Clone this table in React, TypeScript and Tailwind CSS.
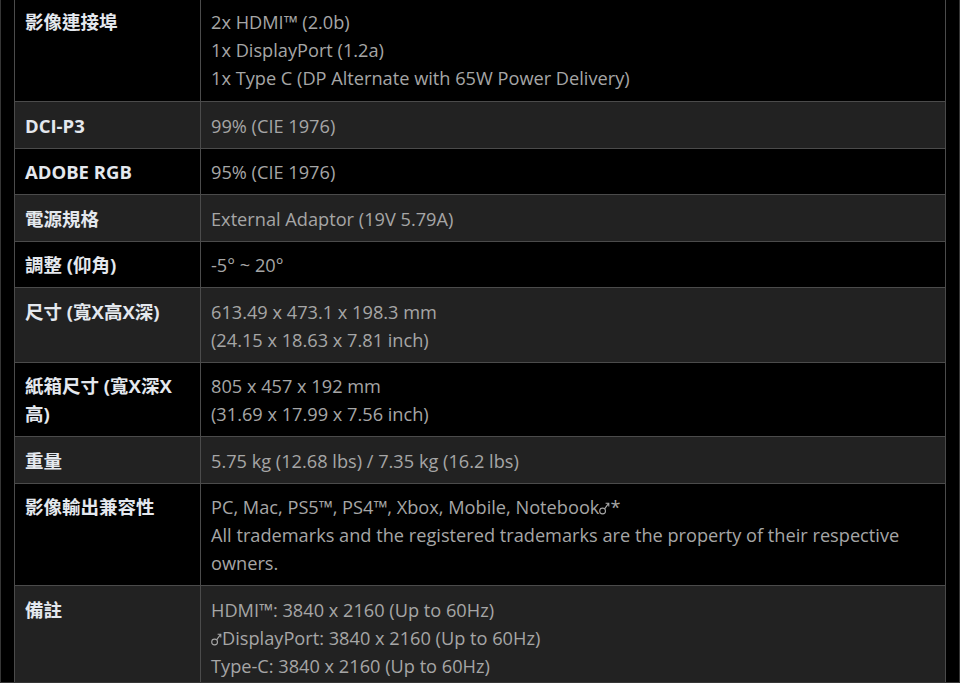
import React from 'react';

type Spec = { label: string; lines: React.ReactNode[] };

// thin male-sign style mark used in the source text
const Mark = () => (
  <svg
    width="11"
    height="14"
    viewBox="0 0 11 14"
    className="inline-block align-[-1px]"
    fill="none"
    stroke="currentColor"
    strokeWidth="1.1"
  >
    <circle cx="3.6" cy="10" r="2.9" />
    <path d="M5.6 7.9 L9.8 2.2 M6.6 2.2 H9.8 V5.4" />
  </svg>
);

const specs: Spec[] = [
  { label: '影像連接埠', lines: ['2x HDMI™ (2.0b)', '1x DisplayPort (1.2a)', '1x Type C (DP Alternate with 65W Power Delivery)'] },
  { label: 'DCI-P3', lines: ['99% (CIE 1976)'] },
  { label: 'ADOBE RGB', lines: ['95% (CIE 1976)'] },
  { label: '電源規格', lines: ['External Adaptor (19V 5.79A)'] },
  { label: '調整 (仰角)', lines: ['-5° ~ 20°'] },
  { label: '尺寸 (寬X高X深)', lines: ['613.49 x 473.1 x 198.3 mm', '(24.15 x 18.63 x 7.81 inch)'] },
  { label: '紙箱尺寸 (寬X深X高)', lines: ['805 x 457 x 192 mm', '(31.69 x 17.99 x 7.56 inch)'] },
  { label: '重量', lines: ['5.75 kg (12.68 lbs) / 7.35 kg (16.2 lbs)'] },
  {
    label: '影像輸出兼容性',
    lines: [
      <>PC, Mac, PS5™, PS4™, Xbox, Mobile, Notebook<Mark />*</>,
      'All trademarks and the registered trademarks are the property of their respective owners.',
    ],
  },
  {
    label: '備註',
    lines: ['HDMI™: 3840 x 2160 (Up to 60Hz)', <><Mark />DisplayPort: 3840 x 2160 (Up to 60Hz)</>, 'Type-C: 3840 x 2160 (Up to 60Hz)'],
  },
];

const font = { fontFamily: '"Open Sans", "Noto Sans CJK TC", "Noto Sans", sans-serif' };

const App: React.FC = () => {
  return (
    <div className="w-[960px] h-[683px] overflow-hidden bg-black border border-t-0 border-[#363636]" style={font}>
      {/* spec table */}
      <div className="ml-[13px] w-[932px] border-l border-r border-[#4b4b4b]">
        {specs.map((row, i) => (
          <div
            key={row.label}
            className={`flex border-b border-[#4b4b4b] ${i % 2 === 1 ? 'bg-[#222222]' : 'bg-black'}`}
          >
            <div
              className={`w-[186px] shrink-0 border-r border-[#4b4b4b] px-[10px] text-[18.5px] leading-[28px] font-bold text-[#e4e8ee] ${
                i === 0 ? 'pt-[8px] pb-[9px]' : 'pt-[9.5px] pb-[8px]'
              }`}
            >
              {row.label}
            </div>
            <div
              className={`flex-1 px-[10px] text-[18.2px] leading-[28px] text-[#a6a6a6] ${
                i === 0 ? 'pt-[8px] pb-[9px]' : 'pt-[9.5px] pb-[8px]'
              }`}
            >
              {row.lines.map((l, j) => (
                <div key={j}>{l}</div>
              ))}
            </div>
          </div>
        ))}
      </div>
    </div>
  );
};

export default App;
